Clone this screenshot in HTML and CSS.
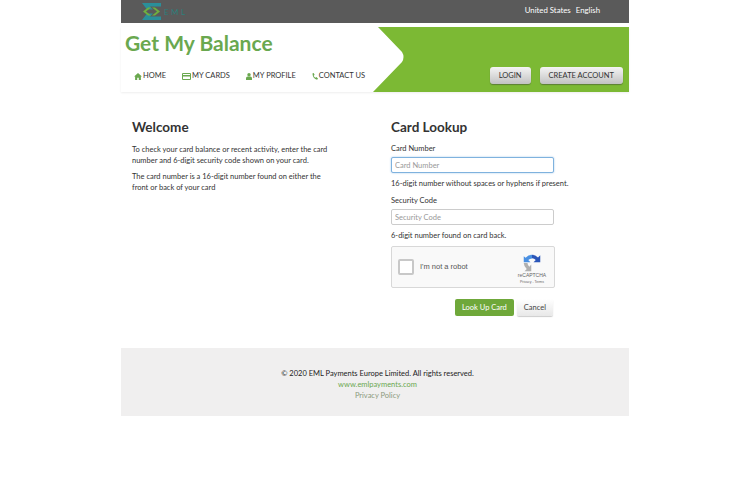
FILE: index.html
```html
<!DOCTYPE html>
<html>
<head>
<title>Get My Balance</title>
<link rel="stylesheet" href="styles.css">
</head>
<body>
<div class="page">

<div class="topbar">
  <div class="logo">
    <svg width="19" height="17" viewBox="0 0 19 17">
      <path d="M0 0h19v3.500H8l3 3H5z" fill="#2a8f9a"/>
      <path d="M0 17h19v-3.500H8l3-3H5z" fill="#2a8f9a"/>
      <path d="M1 8.500l5-4h3l-5 4 5 4H6z" fill="#6fb03f"/>
      <path d="M18 8.500l-5-4h-3l5 4-5 4h3z" fill="#6fb03f"/>
    </svg>
    <span class="logo-text">EML</span>
  </div>
  <div class="locale"><span>United States</span><span>English</span></div>
</div>

<div class="banner">
  <svg class="banner-shape" width="256" height="65" viewBox="0 0 256 65">
    <path d="M5 0L29 25Q32 30 29 35L0 65H256V0Z" fill="#7cb934"/>
  </svg>
  <div class="banner-main">
    <h1>Get My Balance</h1>
    <ul class="nav">
      <li>
        <svg width="8" height="7" viewBox="0 0 9 8"><path d="M4.500 0L9 4H7.800V8H5.400V5.400H3.600V8H1.200V4H0Z" fill="#6aa84f"/></svg>
        HOME
      </li>
      <li>
        <svg width="9" height="7" viewBox="0 0 9 7"><path d="M.5.500h8v6h-8z" fill="none" stroke="#6aa84f"/><path d="M1 2h7v1.500H1z" fill="#6aa84f"/></svg>
        MY CARDS
      </li>
      <li>
        <svg width="6" height="7" viewBox="0 0 7 8"><circle cx="3.500" cy="2" r="2" fill="#6aa84f"/><path d="M0 8V6q0-2 2-2h3q2 0 2 2v2z" fill="#6aa84f"/></svg>
        MY PROFILE
      </li>
      <li>
        <svg width="6" height="7" viewBox="0 0 7 8"><path d="M.5.500L2 0l1 2-1 1q.5 1.500 2 2.500l1-.8L7 6.200 6 7.800Q1 7 .5.500z" fill="#6aa84f"/></svg>
        CONTACT US
      </li>
    </ul>
  </div>
  <div class="banner-btns">
    <span class="silver-btn">LOGIN</span>
    <span class="silver-btn">CREATE ACCOUNT</span>
  </div>
</div>

<div class="content">
  <div class="col-left">
    <h2>Welcome</h2>
    <p>To check your card balance or recent activity, enter the card number and 6-digit security code shown on your card.</p>
    <p>The card number is a 16-digit number found on either the front or back of your card</p>
  </div>
  <div class="col-right">
    <h2>Card Lookup</h2>
    <label>Card Number</label>
    <input class="field field-focus" type="text" placeholder="Card Number">
    <p class="hint">16-digit number without spaces or hyphens if present.</p>
    <label>Security Code</label>
    <input class="field" type="text" placeholder="Security Code">
    <p class="hint">6-digit number found on card back.</p>
    <div class="captcha">
      <span class="captcha-box"></span>
      <span class="captcha-label">I'm not a robot</span>
      <div class="captcha-brand">
        <svg width="18" height="18" viewBox="0 0 24 24">
          <path d="M12 1a11 11 0 0 1 8 3.500L23 1.500V11H14l3-3a7 7 0 0 0-5-2.500z" fill="#2a55b8"/>
          <path d="M12 1v5a7 7 0 0 0-5 2l3 3H1V3l2.500 2A11 11 0 0 1 12 1z" fill="#4a90e2"/>
          <path d="M1 12h5a7 7 0 0 0 2.500 5L11 14v9H2l3-3a11 11 0 0 1-4-8z" fill="#b0b0b0"/>
        </svg>
        <span class="captcha-name">reCAPTCHA</span>
        <span class="captcha-links">Privacy - Terms</span>
      </div>
    </div>
    <div class="actions">
      <span class="btn-green">Look Up Card</span>
      <span class="btn-cancel">Cancel</span>
    </div>
  </div>
</div>

<div class="footer">
  <div>&copy; 2020 EML Payments Europe Limited. All rights reserved.</div>
  <div class="foot-link">www.emlpayments.com</div>
  <div class="foot-link foot-muted">Privacy Policy</div>
</div>

</div>
</body>
</html>
```

FILE: styles.css
```css
/* Get My Balance page */

body
{ margin: 0;
background-color: #fff;
font-family: Lato, "Liberation Sans", sans-serif;
color: #333;
}

.page
{ width: 508px;
margin-left: 121px;
}

/* Top bar */

.topbar
{ height: 23px;
background-color: #5a5a5a;
display: flex;
justify-content: space-between;
padding-left: 21px;
padding-right: 29px;
}

.logo
{ display: flex;
align-items: center;
gap: 3px;
}

.logo-text
{ color: #2f7f7c;
font-size: 8px;
letter-spacing: 2.500px;
}

.locale
{ display: flex;
gap: 5px;
color: #fff;
font-size: 7.800px;
line-height: 20px;
}

/* Banner */

.banner
{ height: 65px;
margin-top: 4px;
display: flex;
justify-content: space-between;
position: relative;
box-shadow: 0 1px 2px #eee;
}

.banner-shape
{ position: absolute;
top: 0;
right: 0;
}

.banner-main
{ position: relative;
padding-left: 4px;
}

h1
{ margin: 0;
padding-top: 4px;
font-size: 21px;
line-height: 24px;
font-weight: bold;
color: #6aa84f;
}

.nav
{ list-style: none;
margin: 16px 0 0 9px;
padding: 0;
display: flex;
gap: 16px;
font-size: 7.500px;
line-height: 10px;
color: #333;
}

.nav li
{ display: flex;
align-items: center;
gap: 1px;
}

.banner-btns
{ position: relative;
display: flex;
align-items: flex-start;
gap: 9px;
padding-top: 40px;
padding-right: 6px;
}

.silver-btn
{ height: 17px;
line-height: 17px;
padding: 0 9px;
border-radius: 3px;
font-size: 7.500px;
color: #333;
background: linear-gradient(#f4f4f4, #c2c2c2);
box-shadow: 0 1px 1px #5d7f35;
}

/* Content */

.content
{ display: flex;
padding-top: 27px;
height: 229px;
}

.col-left
{ width: 259px;
padding-left: 11px;
}

.col-right
{ width: 238px;
}

h2
{ margin: 0 0 9px 0;
font-size: 13.500px;
line-height: 16px;
font-weight: bold;
color: #333;
}

p
{ margin: 0 0 5px 0;
font-size: 7.500px;
line-height: 11px;
width: 200px;
}

label
{ display: block;
font-size: 7.500px;
line-height: 11px;
margin-top: -1px;
margin-bottom: 3px;
}

.field
{ display: block;
box-sizing: border-box;
width: 163px;
height: 16px;
padding: 0 3px;
border: 1px solid #ccc;
border-radius: 2px;
font-family: Lato, sans-serif;
font-size: 7.500px;
}

.field::placeholder
{ color: #999;
}

.field-focus
{ border-color: #7fb2de;
box-shadow: 0 0 2px #9cc4e8;
}

p.hint
{ width: auto;
margin: 5px 0 7px 0;
}

/* Captcha */

.captcha
{ box-sizing: border-box;
width: 164px;
height: 42px;
margin-top: -2px;
border: 1px solid #d8d8d8;
border-radius: 2px;
background-color: #f9f9f9;
display: flex;
align-items: center;
padding-left: 6px;
}

.captcha-box
{ box-sizing: border-box;
width: 16px;
height: 16px;
border: 2px solid #c8c8c8;
border-radius: 2px;
background-color: #fff;
}

.captcha-label
{ margin-left: 6px;
margin-bottom: 2px;
font-family: "Liberation Sans", sans-serif;
font-size: 7.500px;
color: #555;
}

.captcha-brand
{ margin-left: auto;
width: 44px;
display: flex;
flex-direction: column;
align-items: center;
padding-top: 4px;
font-family: "Liberation Sans", sans-serif;
color: #666;
}

.captcha-name
{ font-size: 5px;
line-height: 7px;
}

.captcha-links
{ font-size: 3.500px;
line-height: 6px;
}

.actions
{ display: flex;
justify-content: flex-end;
gap: 3px;
width: 162px;
margin-top: 11px;
font-size: 7.500px;
line-height: 17px;
}

.btn-green
{ padding: 0 7px;
border-radius: 2px;
color: #fff;
background-color: #6fa83a;
}

.btn-cancel
{ padding: 0 7px;
border-radius: 2px;
color: #444;
background: linear-gradient(#fff, #e8e8e8);
box-shadow: 0 1px 1px #ccc;
}

/* Footer */

.footer
{ height: 68px;
box-sizing: border-box;
padding-top: 20px;
padding-left: 5px;
background-color: #f0efef;
text-align: center;
font-size: 7.500px;
line-height: 11px;
color: #222;
}

.foot-link
{ color: #6aa84f;
}

.foot-muted
{ color: #8c9a7e;
}
```
